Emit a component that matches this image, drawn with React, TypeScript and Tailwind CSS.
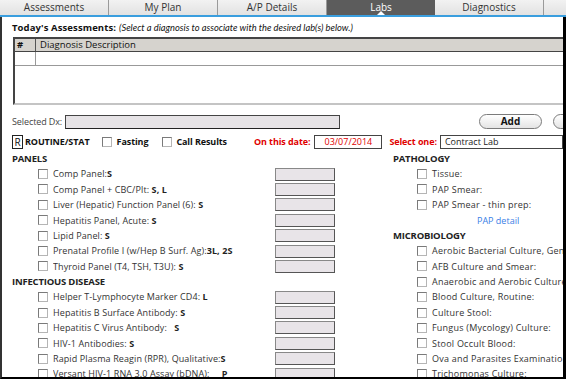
import React from "react";

const FONT = { fontFamily: '"Open Sans", "Noto Sans", sans-serif' };

const tabs = ["Assessments", "My Plan", "A/P Details", "Labs", "Diagnostics"];

type Item = { label: string; code?: string };

const panels: Item[] = [
  { label: "Comp Panel:", code: "S" },
  { label: "Comp Panel + CBC/Plt: ", code: "S, L" },
  { label: "Liver (Hepatic) Function Panel (6): ", code: "S" },
  { label: "Hepatitis Panel, Acute: ", code: "S" },
  { label: "Lipid Panel: ", code: "S" },
  { label: "Prenatal Profile I (w/Hep B Surf. Ag):", code: "3L, 2S" },
  { label: "Thyroid Panel (T4, TSH, T3U): ", code: "S" },
];

const infectious: Item[] = [
  { label: "Helper T-Lymphocyte Marker CD4: ", code: "L" },
  { label: "Hepatitis B Surface Antibody: ", code: "S" },
  { label: "Hepatitis C Virus Antibody:\u00a0\u00a0 ", code: "S" },
  { label: "HIV-1 Antibodies: ", code: "S" },
  { label: "Rapid Plasma Reagin (RPR), Qualitative:", code: "S" },
  { label: "Versant HIV-1 RNA 3.0 Assay (bDNA):\u00a0\u00a0\u00a0\u00a0 ", code: "P" },
];

const pathology = ["Tissue:", "PAP Smear:", "PAP Smear - thin prep:"];

const micro = [
  "Aerobic Bacterial Culture, General:",
  "AFB Culture and Smear:",
  "Anaerobic and Aerobic Culture:",
  "Blood Culture, Routine:",
  "Culture Stool:",
  "Fungus (Mycology) Culture:",
  "Stool Occult Blood:",
  "Ova and Parasites Examination:",
  "Trichomonas Culture:",
];

function Box() {
  return (
    <span className="inline-block h-[10px] w-[10px] shrink-0 border border-[#7a7a7a] border-b-[#b5b5b5] border-r-[#b5b5b5] bg-white" />
  );
}

function Heading({ children }: { children: React.ReactNode }) {
  return (
    <div className="flex h-[15.4px] items-center text-[9.5px] font-bold tracking-[-0.2px] text-[#222]">{children}</div>
  );
}

function LeftRow({ item }: { item: Item }) {
  return (
    <div className="flex h-[15.4px] items-center pl-[26px]">
      <Box />
      <span className="ml-[5px] w-[222px] overflow-hidden whitespace-pre text-[9px] tracking-[0.1px] text-[#333]">
        {item.label}
        {item.code && <b className="text-[#222]">{item.code}</b>}
      </span>
      <span className="h-[13px] w-[60px] border border-[#555] border-t-[#888] border-l-[#888] bg-[#e8e4e8]" />
    </div>
  );
}

function RightRow({ label }: { label: string }) {
  return (
    <div className="flex h-[15.4px] items-center pl-[24px]">
      <Box />
      <span className="ml-[5px] whitespace-nowrap text-[9px] tracking-[0.22px] text-[#333]">{label}</span>
    </div>
  );
}

export default function App() {
  return (
    <div className="h-[379px] w-[566px] overflow-hidden bg-white" style={FONT}>
      {/* tab strip */}
      <div className="flex h-[17px] border-b-2 border-[#3a9ede] bg-gradient-to-b from-[#f2f2f2] to-[#e2e2e2]">
        {tabs.map((t) => {
          const active = t === "Labs";
          return (
            <div
              key={t}
              className={
                active
                  ? "relative flex w-[108px] items-center justify-center bg-[#5c5c5c] text-[10px] text-white"
                  : "flex w-[109px] items-center justify-center border-r border-[#9a9a9a] text-[10px] text-[#333]"
              }
            >
              {t}
              {active && (
                <span className="absolute bottom-0 left-1/2 h-0 w-0 -translate-x-1/2 border-x-[4px] border-b-[4px] border-x-transparent border-b-white" />
              )}
            </div>
          );
        })}
        <div className="flex-1" />
      </div>

      <div className="h-[362px] overflow-hidden border-b-2 border-l-2 border-r-[3px] border-b-black border-l-[#333] border-r-black pl-[10px]">
        {/* title */}
        <div className="mt-[5px] flex h-[12px] items-center whitespace-nowrap text-[#111]">
          <b className="text-[9.5px] tracking-[0.1px]">Today's Assessments:</b>
          <i className="ml-[3px] text-[9.3px]" style={{ fontFamily: "Lato, sans-serif" }}>
            (Select a diagnosis to associate with the desired lab(s) below.)
          </i>
        </div>

        {/* diagnosis table */}
        <div className="ml-[1px] mt-[3px] h-[68px] border-b-2 border-l-2 border-t-2 border-b-[#c4c4c4] border-l-[#444] border-t-[#444]">
          <div className="flex h-[13px] border-b border-[#444] bg-[#d6d3ce] text-[9.5px] text-[#111]">
            <div className="flex w-[21px] items-center border-r border-[#555] pl-[2px] font-bold">#</div>
            <div className="flex items-center pl-[4px]">Diagnosis Description</div>
          </div>
          <div className="flex h-[14px] border-b border-[#999]">
            <div className="w-[21px] border-r border-[#999]" />
          </div>
        </div>

        {/* selected dx */}
        <div className="mt-[9px] flex h-[15px] items-center whitespace-nowrap">
          <span className="w-[53px] shrink-0 text-[9px] tracking-[-0.1px] text-[#444]">Selected Dx:</span>
          <span className="h-[14px] w-[275px] shrink-0 border border-[#444] border-b-[#222] bg-[#e6e3e6]" />
          <button className="ml-[139px] flex h-[15px] w-[63px] shrink-0 items-center justify-center rounded-full border border-[#7b7b7b] bg-gradient-to-b from-white to-[#e4e4e4] text-[10px] font-bold text-[#111]">
            Add
          </button>
          <button className="ml-[11px] h-[15px] w-[60px] shrink-0 rounded-full border border-[#7b7b7b] bg-gradient-to-b from-white to-[#e4e4e4]" />
        </div>

        {/* options */}
        <div className="mt-[6px] flex h-[14px] items-center whitespace-nowrap text-[9px] font-bold tracking-[-0.1px] text-[#111]">
          <span className="flex h-[14px] w-[11px] shrink-0 items-center justify-center border border-[#222] text-[10px] font-normal tracking-normal">
            R
          </span>
          <span className="ml-[2px]">ROUTINE/STAT</span>
          <span className="ml-[12px] flex items-center">
            <Box />
          </span>
          <span className="ml-[5px]">Fasting</span>
          <span className="ml-[14px] flex items-center">
            <Box />
          </span>
          <span className="ml-[4px]">Call Results</span>
          <span className="ml-[27px] text-[#e00000]">On this date:</span>
          <span className="ml-[4px] flex h-[14px] w-[68px] shrink-0 items-center justify-center border border-[#444] text-[9px] font-normal tracking-normal text-[#e00000]">
            03/07/2014
          </span>
          <span className="ml-[7px] text-[#e00000]">Select one:</span>
          <span className="ml-[3px] flex h-[14px] flex-1 items-center border border-[#444] pl-[4px] text-[9px] font-normal tracking-normal text-[#222]">
            Contract Lab
          </span>
        </div>

        {/* lab lists */}
        <div className="mt-[2px] flex">
          <div className="w-[381px] shrink-0">
            <Heading>PANELS</Heading>
            {panels.map((p) => (
              <LeftRow key={p.label} item={p} />
            ))}
            <Heading>INFECTIOUS DISEASE</Heading>
            {infectious.map((p) => (
              <LeftRow key={p.label} item={p} />
            ))}
          </div>
          <div className="min-w-0 flex-1 overflow-hidden">
            <Heading>PATHOLOGY</Heading>
            {pathology.map((l) => (
              <RightRow key={l} label={l} />
            ))}
            <div className="flex h-[15.4px] items-center pl-[84px] text-[9px] text-[#3a7ee6]">PAP detail</div>
            <Heading>MICROBIOLOGY</Heading>
            {micro.map((l) => (
              <RightRow key={l} label={l} />
            ))}
          </div>
        </div>
      </div>
    </div>
  );
}
